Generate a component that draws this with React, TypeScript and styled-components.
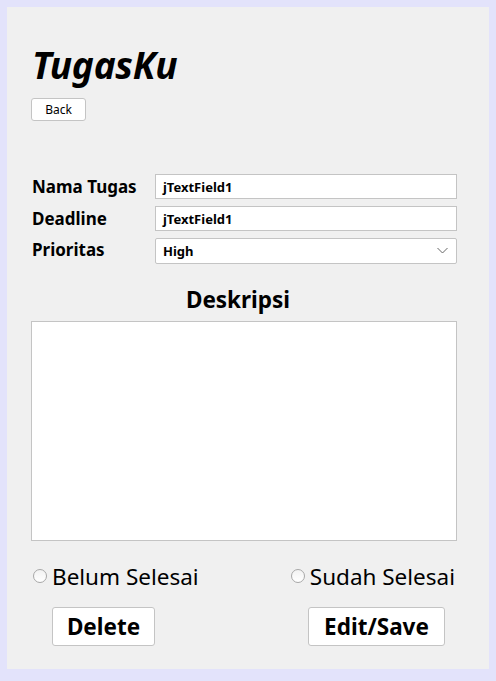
import styled, { createGlobalStyle } from "styled-components";

const Global = createGlobalStyle`
  html, body {
    margin: 0;
    padding: 0;
    background: #e3e3fb;
  }
  body {
    font-family: "Noto Sans", "Open Sans", sans-serif;
    color: #000;
  }
`;

const Frame = styled.div`
  width: 496px;
  height: 681px;
  padding: 7px 7px 12px 7px;
  box-sizing: border-box;
`;

const Panel = styled.div`
  height: 100%;
  background: #f0f0f0;
  padding: 0 32px 0 24px;
  box-sizing: border-box;
  display: flex;
  flex-direction: column;
`;

const Title = styled.h1`
  margin: 33px 0 0 1px;
  font-size: 37px;
  line-height: 50px;
  font-weight: 700;
  font-style: italic;
  letter-spacing: -0.2px;
`;

const SmallButton = styled.button`
  align-self: flex-start;
  margin-top: 8px;
  width: 55px;
  height: 23px;
  padding: 0;
  background: #fff;
  border: 1px solid #c4c4c4;
  border-radius: 3px;
  font-family: inherit;
  font-size: 12px;
  color: #000;
`;

const Form = styled.div`
  margin-top: 53px;
  display: grid;
  grid-template-columns: 124px 1fr;
  grid-template-rows: 25px 25px 25px;
  row-gap: 7px;
  align-items: center;
`;

const Label = styled.label<{ $lift?: number }>`
  font-size: 17px;
  font-weight: 700;
  padding-left: 1px;
  margin-top: ${(p) => -(p.$lift ?? 0)}px;
`;

const Field = styled.div`
  height: 25px;
  background: #fff;
  border: 1px solid #c4c4c4;
  box-sizing: border-box;
  display: flex;
  align-items: center;
  padding: 0 7px;
  font-size: 13px;
  font-weight: 700;
`;

const Combo = styled(Field)`
  height: 26px;
  justify-content: space-between;
  border-radius: 2px;
  padding-right: 8px;
`;

const Heading = styled.h2`
  margin: 22px 0 0 0;
  padding-right: 12px;
  text-align: center;
  font-size: 22.5px;
  line-height: 30px;
  font-weight: 700;
`;

const TextArea = styled.div`
  margin-top: 6px;
  height: 220px;
  background: #fff;
  border: 1px solid #c4c4c4;
  box-sizing: border-box;
`;

const RadioRow = styled.div`
  margin-top: 22px;
  display: flex;
  justify-content: space-between;
  padding: 0 2px 0 2px;
`;

const Radio = styled.div`
  display: flex;
  align-items: center;
  gap: 5px;
  font-size: 22.5px;
  line-height: 28px;
`;

const Dot = styled.span`
  width: 14px;
  height: 14px;
  border-radius: 50%;
  border: 1px solid #a8a8a8;
  background: linear-gradient(#f2f2f2, #ffffff);
  box-sizing: border-box;
  margin-top: -3px;
`;

const ButtonRow = styled.div`
  margin-top: 16px;
  display: flex;
  justify-content: space-between;
  padding: 0 12px 0 21px;
`;

const BigButton = styled.button<{ $w: number }>`
  width: ${(p) => p.$w}px;
  height: 39px;
  padding: 0;
  background: #fff;
  border: 1px solid #c4c4c4;
  border-radius: 3px;
  font-family: inherit;
  font-size: 22.5px;
  font-weight: 700;
  color: #000;
`;

export default function App() {
  return (
    <Frame>
      <Global />
      <Panel>
        <Title>TugasKu</Title>
        <SmallButton>Back</SmallButton>
        <Form>
          <Label>Nama Tugas</Label>
          <Field>jTextField1</Field>
          <Label>Deadline</Label>
          <Field>jTextField1</Field>
          <Label $lift={3}>Prioritas</Label>
          <Combo>
            <span>High</span>
            <svg width="11" height="7" viewBox="0 0 11 7">
              <path d="M0.5 1 L5.5 6 L10.5 1" fill="none" stroke="#666" strokeWidth="1" />
            </svg>
          </Combo>
        </Form>
        <Heading>Deskripsi</Heading>
        <TextArea />
        <RadioRow>
          <Radio>
            <Dot />
            Belum Selesai
          </Radio>
          <Radio>
            <Dot />
            Sudah Selesai
          </Radio>
        </RadioRow>
        <ButtonRow>
          <BigButton $w={103}>Delete</BigButton>
          <BigButton $w={137}>Edit/Save</BigButton>
        </ButtonRow>
      </Panel>
    </Frame>
  );
}
